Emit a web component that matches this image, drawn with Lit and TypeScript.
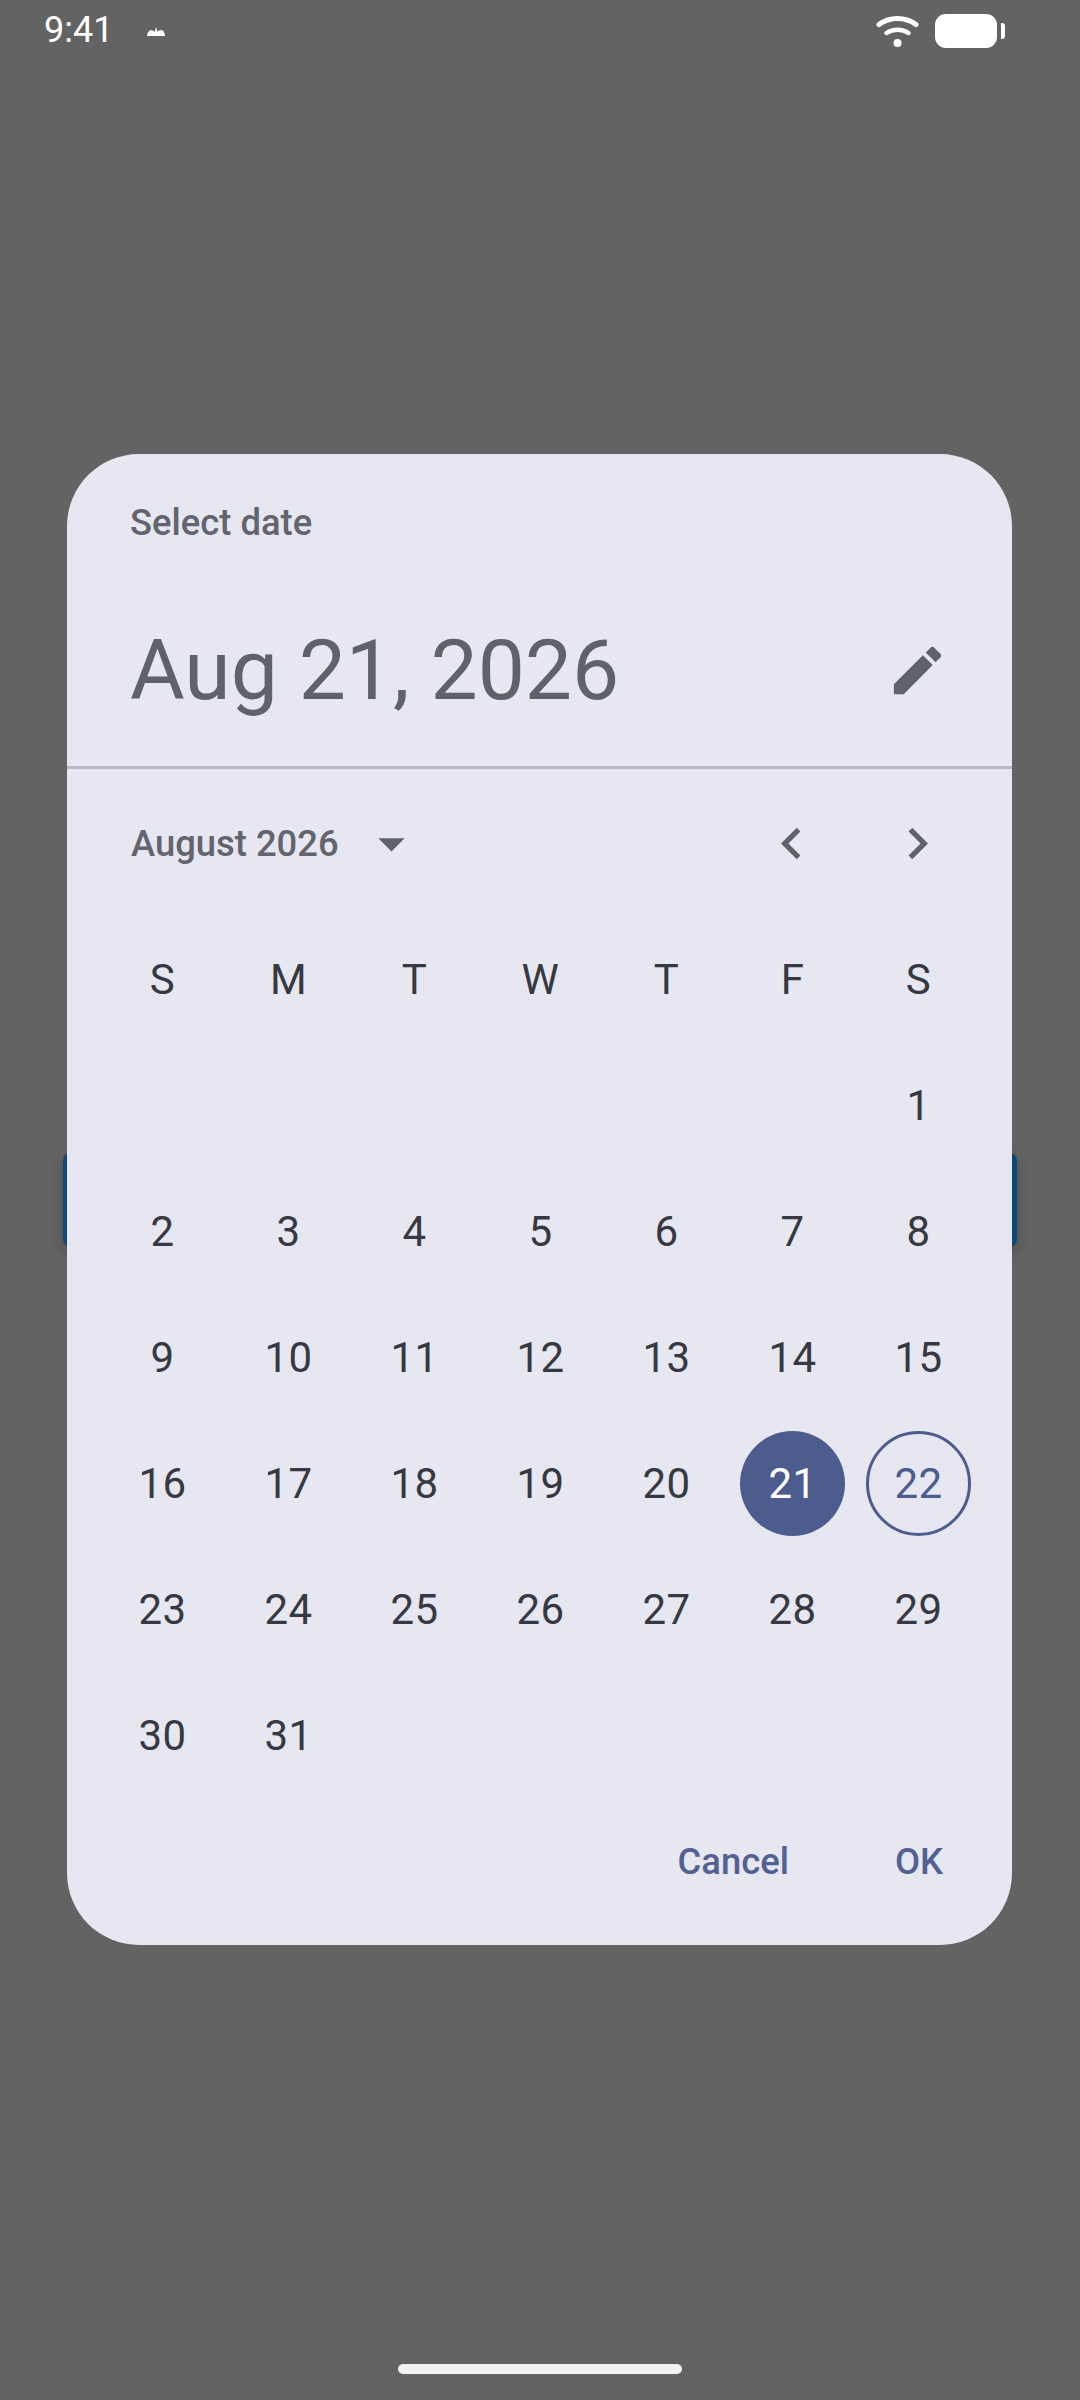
import { LitElement, css, html, svg } from "lit";
import { customElement } from "lit/decorators.js";

const icon = (d: string, size = 63) => html`
    <svg class="icon" width=${size} height=${size} viewBox="0 0 24 24">${svg`<path d=${d}></path>`}</svg>
`;

const EDIT = "M3 17.25V21h3.75L17.81 9.94l-3.75-3.75L3 17.25zM20.71 7.04c.39-.39.39-1.02 0-1.41l-2.34-2.34c-.39-.39-1.02-.39-1.41 0l-1.83 1.83 3.75 3.75 1.83-1.83z";
const ARROW_DOWN = "M7 10l5 5 5-5z";
const PREV = "M15.41 7.41L14 6l-6 6 6 6 1.41-1.41L10.83 12z";
const NEXT = "M10 6L8.59 7.41 13.17 12l-4.58 4.58L10 18l6-6z";

const WEEKDAYS = ["S", "M", "T", "W", "T", "F", "S"];
const FIRST_OFFSET = 6;
const DAYS_IN_MONTH = 31;
const SELECTED = 21;
const TODAY = 22;

@customElement("app-root")
export class AppRoot extends LitElement {
    static styles = css`
    :host {
        display: block;
    }

    .screen {
        position: relative;
        width: 1080px;
        height: 2400px;
        overflow: hidden;
        background-color: #636363;
        font-family: Roboto, "Noto Sans", sans-serif;
        display: flex;
        flex-direction: column;
    }

    .status {
        width: 100%;
        height: 454px;
        flex: none;
        box-sizing: border-box;
        padding: 12px 75px 0 44px;
        display: flex;
        align-items: flex-start;
        color: #fff;
        font-size: 36px;
        line-height: 36px;
    }

    .clock {
        height: 36px;
    }

    .notif {
        margin: 15px 0 0 34px;
    }

    .wifi {
        margin: 3px 0 0 auto;
    }

    .battery {
        margin: 2px 0 0 16px;
        display: flex;
        align-items: center;
    }

    .cell {
        width: 62px;
        height: 34px;
        border-radius: 11px;
        background-color: #fff;
    }

    .nub {
        width: 4px;
        height: 16px;
        margin-left: 4px;
        border-radius: 0 3px 3px 0;
        background-color: #fff;
    }

    .behind {
        position: absolute;
        top: 1153px;
        left: 63px;
        width: 954px;
        height: 94px;
        border-radius: 8px;
        background-color: #0b4a78;
        box-shadow: 0 4px 14px rgba(0, 0, 0, .22);
    }

    .dialog {
        position: relative;
        width: 945px;
        height: 1491px;
        margin-left: 67px;
        border-radius: 72px;
        background-color: #e6e7f1;
        display: flex;
        flex-direction: column;
    }

    .title {
        padding: 47px 63px 0;
        height: 43px;
        line-height: 43px;
        font-size: 36.4px;
        font-weight: 500;
        color: #62646e;
    }

    .headline {
        height: 225px;
        box-sizing: border-box;
        padding: 30px 63px 0;
        display: flex;
        align-items: center;
        justify-content: space-between;
        border-bottom: 3px solid #b9bac5;
        color: #5f616b;
        font-size: 84px;
    }

    .month {
        height: 148px;
        box-sizing: border-box;
        padding: 0 63px 0 64px;
        display: flex;
        align-items: center;
        color: #62646e;
        font-size: 36.4px;
        font-weight: 500;
    }

    .month .drop {
        margin-left: 21px;
    }

    .month .prev {
        margin-left: auto;
    }

    .month .next {
        margin-left: 63px;
    }

    .icon {
        display: block;
        fill: #5f616b;
    }

    .grid {
        margin: -1px 0 0 32px;
        display: grid;
        grid-template-columns: repeat(7, 126px);
        grid-auto-rows: 126px;
        justify-items: center;
        align-items: center;
        color: #363842;
        font-size: 42px;
        letter-spacing: .5px;
        text-indent: 1px;
    }

    .day {
        width: 105px;
        height: 105px;
        box-sizing: border-box;
        border-radius: 50%;
        display: flex;
        align-items: center;
        justify-content: center;
    }

    .selected {
        background-color: #4d5c8e;
        color: #fff;
    }

    .today {
        border: 3px solid #4d5c8e;
        color: #4d5c8e;
    }

    .actions {
        margin-top: 1px;
        padding-right: 69px;
        display: flex;
        justify-content: flex-end;
        gap: 106px;
        color: #526192;
        font-size: 36.4px;
        font-weight: 500;
        line-height: 126px;
    }

    .pill {
        position: absolute;
        left: 398px;
        top: 2364px;
        width: 284px;
        height: 10px;
        border-radius: 5px;
        background-color: #f3f3f3;
    }
    `;

    renderDay(n: number) {
        const cls = n === SELECTED ? "selected" : n === TODAY ? "today" : "";
        return html`<div class="day ${cls}">${n}</div>`;
    }

    render() {
        const blanks = Array.from({ length: FIRST_OFFSET }, () => html`<div></div>`);
        const days = Array.from({ length: DAYS_IN_MONTH }, (_, i) => this.renderDay(i + 1));

        return html`
        <div class="screen">
            <div class="status">
                <span class="clock">9:41</span>
                <svg class="notif" width="18" height="9" viewBox="0 0 18 9" fill="#fff">
                    <path d="M0 9 .5 6.500 2 4 4 3 6 3.500 7.500 5 8.500 2.500 8.500 1.500 9 0 9.500 1.500 10 2.500 10.500 5 12 3.500 14.500 3 16.500 4 17.500 6.500 18 9z"></path>
                </svg>
                <svg class="wifi" width="43" height="33" viewBox="0 0 43 33" fill="none" stroke="#fff" stroke-linecap="round">
                    <path d="M3 9.500C14 1.500 29 1.500 40 9.500" stroke-width="5"></path>
                    <path d="M10.500 18C17 13.500 26 13.500 32.500 18" stroke-width="4.500"></path>
                    <circle cx="21.500" cy="28" r="4" fill="#fff" stroke="none"></circle>
                </svg>
                <div class="battery">
                    <div class="cell"></div>
                    <div class="nub"></div>
                </div>
            </div>
            <div class="behind"></div>
            <div class="dialog">
                <div class="title">Select date</div>
                <div class="headline">
                    <span>Aug 21, 2026</span>
                    ${icon(EDIT)}
                </div>
                <div class="month">
                    <span>August 2026</span>
                    <span class="drop">${icon(ARROW_DOWN)}</span>
                    <span class="prev">${icon(PREV)}</span>
                    <span class="next">${icon(NEXT)}</span>
                </div>
                <div class="grid">
                    ${WEEKDAYS.map((d) => html`<div>${d}</div>`)}
                    ${blanks}
                    ${days}
                </div>
                <div class="actions">
                    <span>Cancel</span>
                    <span>OK</span>
                </div>
            </div>
            <div class="pill"></div>
        </div>
        `;
    }
}

declare global {
    interface HTMLElementTagNameMap {
        "app-root": AppRoot
    }
}
